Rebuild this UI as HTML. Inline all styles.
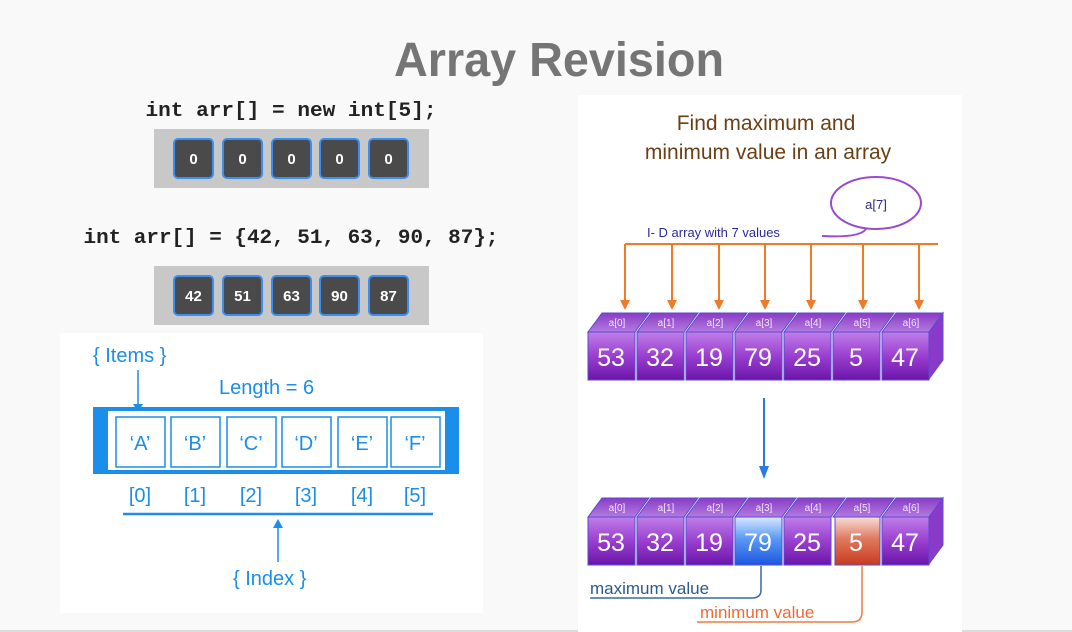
<!DOCTYPE html>
<html><head><meta charset="utf-8"><style>
html,body{margin:0;padding:0;background:#f9f9f9;}
svg{display:block}
</style></head><body>
<svg width="1072" height="632" viewBox="0 0 1072 632" xmlns="http://www.w3.org/2000/svg" font-family="Liberation Sans, sans-serif">
<defs>
<linearGradient id="pf" x1="0" y1="0" x2="0" y2="1"><stop offset="0" stop-color="#c07ee8"/><stop offset="0.5" stop-color="#9a3fd0"/><stop offset="1" stop-color="#6a16a8"/></linearGradient>
<linearGradient id="pt" x1="0" y1="0" x2="0" y2="1"><stop offset="0" stop-color="#8a3cc4"/><stop offset="1" stop-color="#b37ae0"/></linearGradient>
<linearGradient id="bf" x1="0" y1="0" x2="0" y2="1"><stop offset="0" stop-color="#d8e8ff"/><stop offset="0.45" stop-color="#5a9af5"/><stop offset="1" stop-color="#1c56e0"/></linearGradient>
<linearGradient id="rf" x1="0" y1="0" x2="0" y2="1"><stop offset="0" stop-color="#f7ded8"/><stop offset="0.45" stop-color="#e07a60"/><stop offset="1" stop-color="#c83a1e"/></linearGradient>
<g id="top"><polygon points="0,0 14,-19 61,-19 47,0" fill="url(#pt)" stroke="#5a4ad0" stroke-width="1"/></g>
<g id="side"><polygon points="47,0 61,-19 61,28 47,47" fill="#8a3ac8" stroke="#5a4ad0" stroke-width="1"/></g>
</defs>
<rect x="0" y="630" width="1072" height="2" fill="#dcdcdc"/>
<text x="559" y="76" font-size="48" font-weight="bold" fill="#757575" text-anchor="middle" textLength="330" lengthAdjust="spacingAndGlyphs">Array Revision</text>

<!-- code 1 -->
<text x="291" y="116" font-family="Liberation Mono, monospace" font-weight="bold" font-size="20" fill="#222" text-anchor="middle" textLength="291" lengthAdjust="spacingAndGlyphs">int arr[] = new int[5];</text>
<rect x="154" y="129" width="275" height="59" fill="#c8c8c8"/>
<g fill="#4a4a4a" stroke="#3a8ff0" stroke-width="2">
<rect x="174" y="139" width="39" height="39" rx="4"/><rect x="223" y="139" width="39" height="39" rx="4"/><rect x="272" y="139" width="39" height="39" rx="4"/><rect x="320" y="139" width="39" height="39" rx="4"/><rect x="369" y="139" width="39" height="39" rx="4"/>
</g>
<g fill="#fff" font-size="15" font-weight="bold" text-anchor="middle">
<text x="193.5" y="164">0</text><text x="242.5" y="164">0</text><text x="291.5" y="164">0</text><text x="339.5" y="164">0</text><text x="388.5" y="164">0</text>
</g>
<!-- code 2 -->
<text x="291" y="243" font-family="Liberation Mono, monospace" font-weight="bold" font-size="20" fill="#222" text-anchor="middle" textLength="415" lengthAdjust="spacingAndGlyphs">int arr[] = {42, 51, 63, 90, 87};</text>
<rect x="154" y="266" width="275" height="59" fill="#c8c8c8"/>
<g fill="#4a4a4a" stroke="#3a8ff0" stroke-width="2">
<rect x="174" y="276" width="39" height="39" rx="4"/><rect x="223" y="276" width="39" height="39" rx="4"/><rect x="272" y="276" width="39" height="39" rx="4"/><rect x="320" y="276" width="39" height="39" rx="4"/><rect x="369" y="276" width="39" height="39" rx="4"/>
</g>
<g fill="#fff" font-size="15" font-weight="bold" text-anchor="middle">
<text x="193.5" y="301">42</text><text x="242.5" y="301">51</text><text x="291.5" y="301">63</text><text x="339.5" y="301">90</text><text x="388.5" y="301">87</text>
</g>

<!-- left diagram -->
<rect x="60" y="333" width="423" height="280" fill="#fff"/>
<g fill="#1a8ee8" font-size="20">
<text x="93" y="362">{ Items }</text>
<text x="219" y="394">Length = 6</text>
<text x="233" y="585">{ Index }</text>
</g>
<line x1="138" y1="370" x2="138" y2="408" stroke="#1a8ee8" stroke-width="1.5"/>
<polygon points="133,404 143,404 138,412" fill="#1a8ee8"/>
<rect x="93" y="407" width="366" height="67" fill="#1a8ee8"/>
<rect x="108" y="411" width="337" height="59" fill="#fff"/>
<g fill="none" stroke="#1a8ee8" stroke-width="1.5">
<rect x="116" y="417" width="49" height="50"/><rect x="171" y="417" width="49" height="50"/><rect x="227" y="417" width="49" height="50"/><rect x="282" y="417" width="49" height="50"/><rect x="338" y="417" width="49" height="50"/><rect x="391" y="417" width="49" height="50"/>
</g>
<g fill="#1a8ee8" font-size="20" text-anchor="middle">
<text x="140" y="450">‘A’</text><text x="195" y="450">‘B’</text><text x="251" y="450">‘C’</text><text x="306" y="450">‘D’</text><text x="362" y="450">‘E’</text><text x="415" y="450">‘F’</text>
<text x="140" y="502">[0]</text><text x="195" y="502">[1]</text><text x="251" y="502">[2]</text><text x="306" y="502">[3]</text><text x="362" y="502">[4]</text><text x="415" y="502">[5]</text>
</g>
<line x1="123" y1="514" x2="433" y2="514" stroke="#1a8ee8" stroke-width="2.5"/>
<line x1="278" y1="524" x2="278" y2="562" stroke="#1a8ee8" stroke-width="1.5"/>
<polygon points="273,528 283,528 278,519" fill="#1a8ee8"/>

<!-- right diagram -->
<rect x="578" y="95" width="384" height="537" fill="#fff"/>
<g fill="#6b3f14" font-size="21" text-anchor="middle">
<text x="766" y="130">Find maximum and</text>
<text x="768" y="159">minimum value in an array</text>
</g>
<ellipse cx="876" cy="203" rx="45" ry="26" fill="none" stroke="#9a4ad0" stroke-width="2"/>
<path d="M822,236 Q860,238 866,229" fill="none" stroke="#9a4ad0" stroke-width="2"/>
<text x="876" y="209" font-size="13" fill="#2a2a8a" text-anchor="middle">a[7]</text>
<text x="647" y="237" font-size="13" fill="#2a2a9a">I- D array with 7 values</text>
<g stroke="#f07a28" stroke-width="2" fill="none">
<line x1="625" y1="244" x2="938" y2="244"/>
<line x1="625" y1="244" x2="625" y2="302"/><line x1="672" y1="244" x2="672" y2="302"/><line x1="719" y1="244" x2="719" y2="302"/><line x1="765" y1="244" x2="765" y2="302"/><line x1="811" y1="244" x2="811" y2="302"/><line x1="863" y1="244" x2="863" y2="302"/><line x1="919" y1="244" x2="919" y2="302"/>
</g>
<g fill="#f07a28">
<polygon points="620,300 630,300 625,310"/><polygon points="667,300 677,300 672,310"/><polygon points="714,300 724,300 719,310"/><polygon points="760,300 770,300 765,310"/><polygon points="806,300 816,300 811,310"/><polygon points="858,300 868,300 863,310"/><polygon points="914,300 924,300 919,310"/>
</g>

<!-- top row cubes -->
<g>
<use href="#top" x="588" y="332"/><use href="#top" x="637" y="332"/><use href="#top" x="686" y="332"/><use href="#top" x="735" y="332"/><use href="#top" x="784" y="332"/><use href="#top" x="833" y="332"/><use href="#top" x="882" y="332"/><use href="#side" x="882" y="332"/>
<g fill="url(#pf)" stroke="#5a4ad0" stroke-width="1">
<rect x="588" y="332" width="47" height="48"/><rect x="637" y="332" width="47" height="48"/><rect x="686" y="332" width="47" height="48"/><rect x="735" y="332" width="47" height="48"/><rect x="784" y="332" width="47" height="48"/><rect x="833" y="332" width="47" height="48"/><rect x="882" y="332" width="47" height="48"/>
</g>
</g>
<g fill="#f0e6ff" font-size="10" text-anchor="middle">
<text x="617" y="326">a[0]</text><text x="666" y="326">a[1]</text><text x="715" y="326">a[2]</text><text x="764" y="326">a[3]</text><text x="813" y="326">a[4]</text><text x="862" y="326">a[5]</text><text x="911" y="326">a[6]</text>
</g>
<g fill="#fff" font-size="25" text-anchor="middle">
<text x="611" y="366">53</text><text x="660" y="366">32</text><text x="709" y="366">19</text><text x="758" y="366">79</text><text x="807" y="366">25</text><text x="856" y="366">5</text><text x="905" y="366">47</text>
</g>

<line x1="764" y1="398" x2="764" y2="470" stroke="#2a7ae0" stroke-width="2"/>
<polygon points="759,466 769,466 764,479" fill="#2a7ae0"/>

<!-- bottom row cubes -->
<use href="#top" x="588" y="517"/><use href="#top" x="637" y="517"/><use href="#top" x="686" y="517"/><use href="#top" x="735" y="517"/><use href="#top" x="784" y="517"/><use href="#top" x="833" y="517"/><use href="#top" x="882" y="517"/><use href="#side" x="882" y="517"/>
<g stroke="#5a4ad0" stroke-width="1">
<rect x="588" y="517" width="47" height="48" fill="url(#pf)"/><rect x="637" y="517" width="47" height="48" fill="url(#pf)"/><rect x="686" y="517" width="47" height="48" fill="url(#pf)"/><rect x="735" y="517" width="47" height="48" fill="url(#bf)"/><rect x="784" y="517" width="47" height="48" fill="url(#pf)"/><rect x="835" y="517" width="45" height="48" fill="url(#rf)"/><rect x="882" y="517" width="47" height="48" fill="url(#pf)"/>
</g>
<g fill="#f0e6ff" font-size="10" text-anchor="middle">
<text x="617" y="511">a[0]</text><text x="666" y="511">a[1]</text><text x="715" y="511">a[2]</text><text x="764" y="511">a[3]</text><text x="813" y="511">a[4]</text><text x="862" y="511">a[5]</text><text x="911" y="511">a[6]</text>
</g>
<g fill="#fff" font-size="25" text-anchor="middle">
<text x="611" y="551">53</text><text x="660" y="551">32</text><text x="709" y="551">19</text><text x="758" y="551">79</text><text x="807" y="551">25</text><text x="856" y="551">5</text><text x="905" y="551">47</text>
</g>
<path d="M761,566 V590 Q761,598 752,598 H590" fill="none" stroke="#3a6aa0" stroke-width="1.5"/>
<text x="590" y="594" font-size="17" fill="#2a5a90">maximum value</text>
<path d="M862,566 V612 Q862,622 852,622 H697" fill="none" stroke="#f07a40" stroke-width="1.5"/>
<text x="700" y="618" font-size="17" fill="#f06a30">minimum value</text>
</svg>
</body></html>
